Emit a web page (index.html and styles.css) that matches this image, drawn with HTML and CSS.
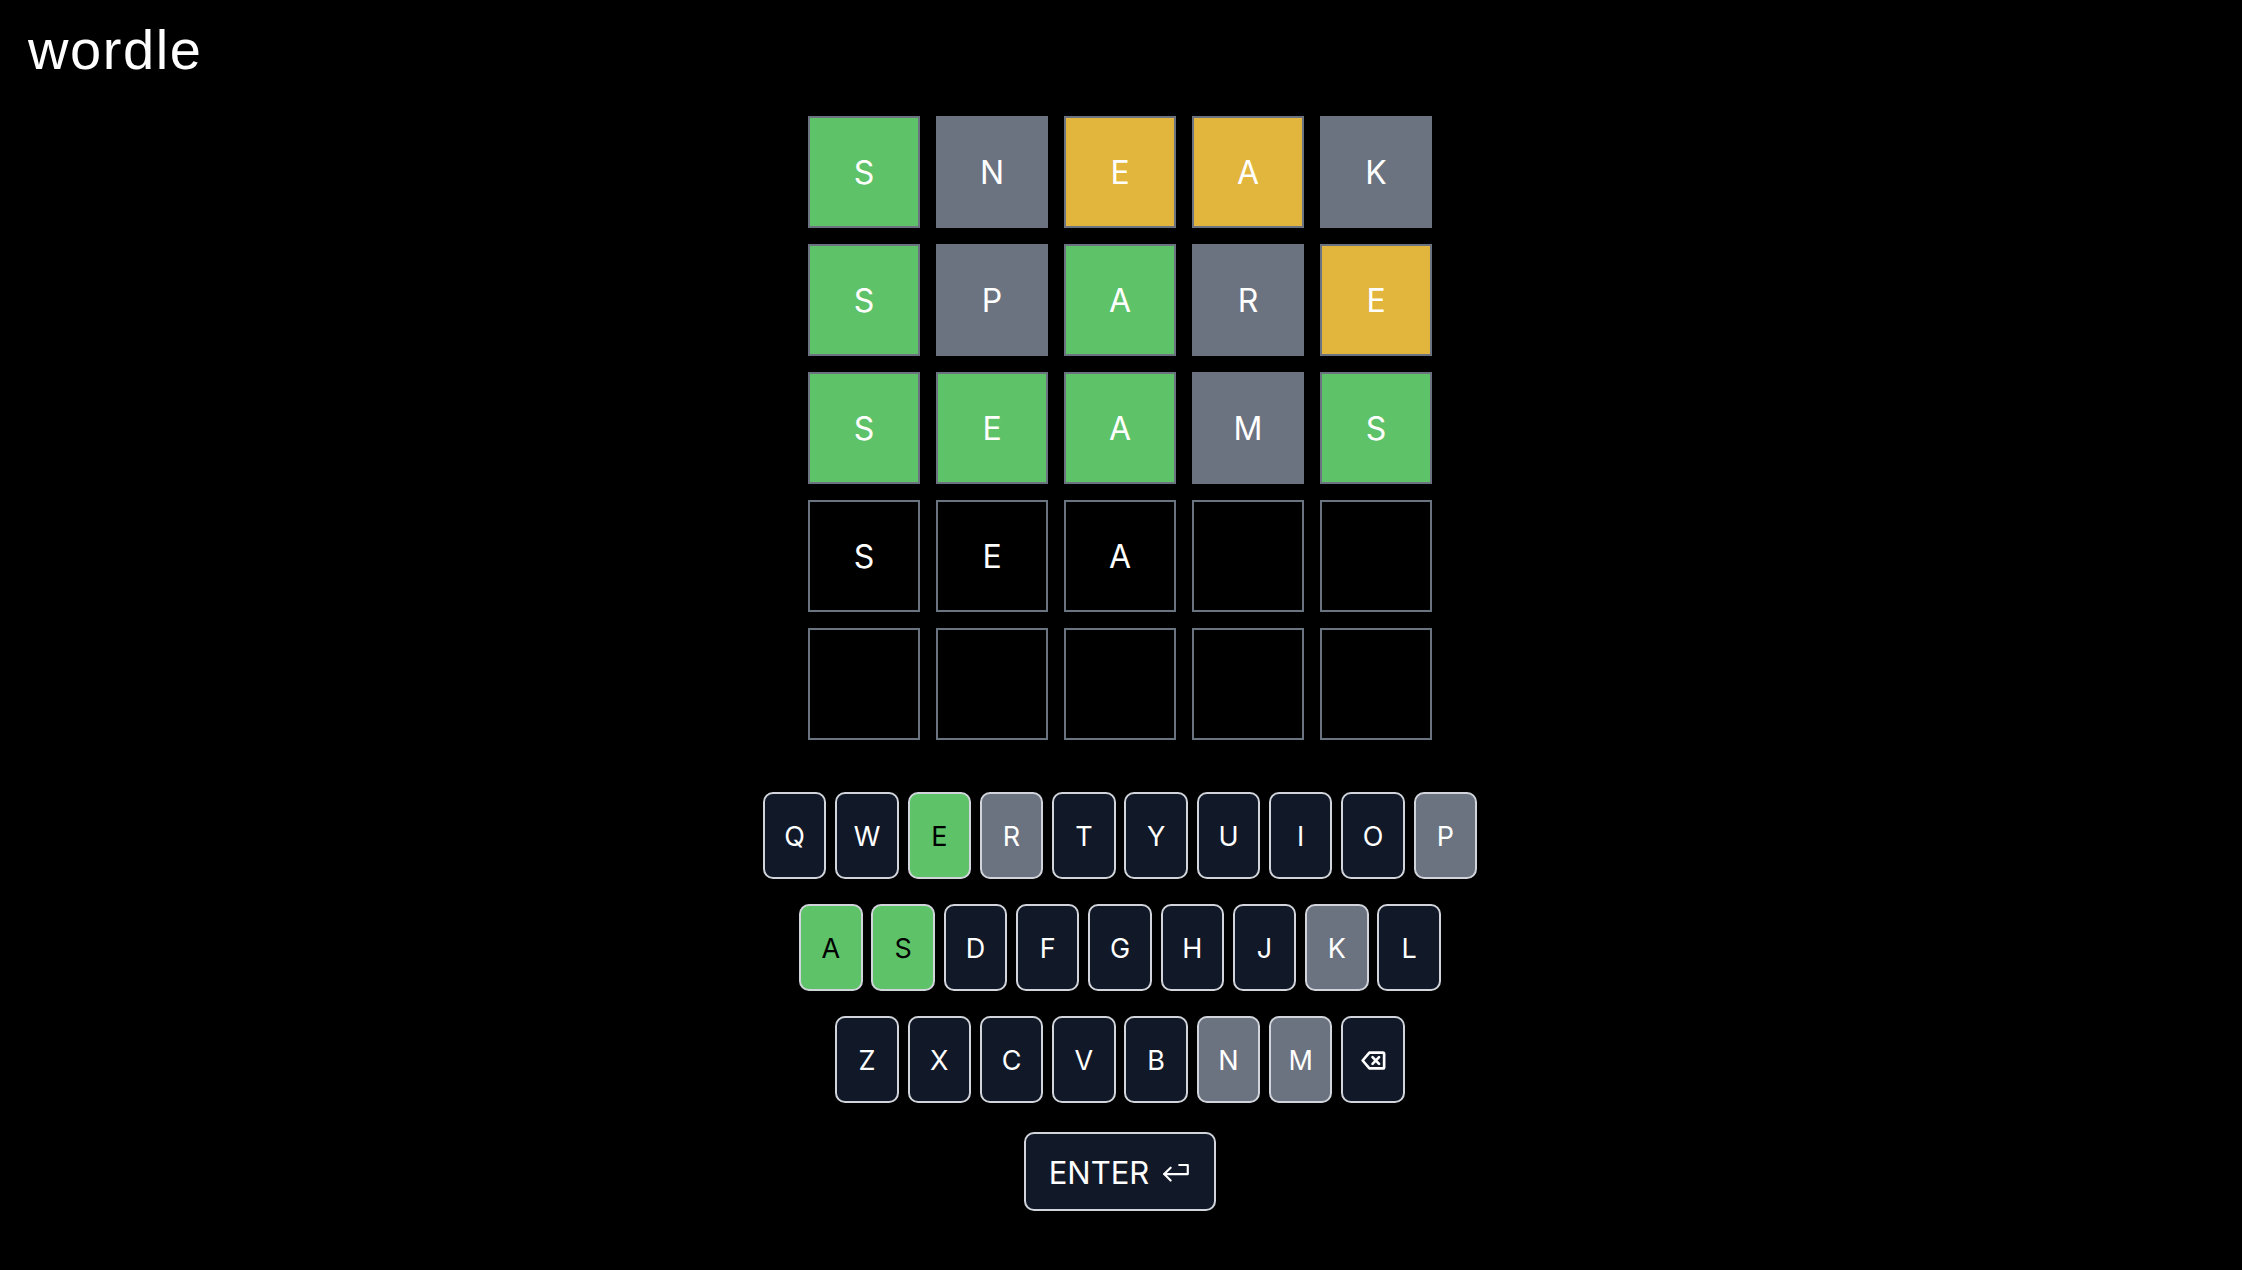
FILE: index.html
```html
<!DOCTYPE html>
<html lang="en">
<head>
<meta charset="utf-8">
<title>wordle</title>
<link rel="stylesheet" href="styles.css">
</head>
<body>
<header class="header">
  <h1 class="title">wordle</h1>
</header>
<main class="game">
  <div class="board">
    <div class="tile correct">S</div>
    <div class="tile absent">N</div>
    <div class="tile present">E</div>
    <div class="tile present">A</div>
    <div class="tile absent">K</div>

    <div class="tile correct">S</div>
    <div class="tile absent">P</div>
    <div class="tile correct">A</div>
    <div class="tile absent">R</div>
    <div class="tile present">E</div>

    <div class="tile correct">S</div>
    <div class="tile correct">E</div>
    <div class="tile correct">A</div>
    <div class="tile absent">M</div>
    <div class="tile correct">S</div>

    <div class="tile empty">S</div>
    <div class="tile empty">E</div>
    <div class="tile empty">A</div>
    <div class="tile empty"></div>
    <div class="tile empty"></div>

    <div class="tile empty"></div>
    <div class="tile empty"></div>
    <div class="tile empty"></div>
    <div class="tile empty"></div>
    <div class="tile empty"></div>
  </div>

  <div class="keyboard">
    <div class="key-row">
      <button class="key">Q</button>
      <button class="key">W</button>
      <button class="key key-correct">E</button>
      <button class="key key-absent">R</button>
      <button class="key">T</button>
      <button class="key">Y</button>
      <button class="key">U</button>
      <button class="key">I</button>
      <button class="key">O</button>
      <button class="key key-absent">P</button>
    </div>
    <div class="key-row">
      <button class="key key-correct">A</button>
      <button class="key key-correct">S</button>
      <button class="key">D</button>
      <button class="key">F</button>
      <button class="key">G</button>
      <button class="key">H</button>
      <button class="key">J</button>
      <button class="key key-absent">K</button>
      <button class="key">L</button>
    </div>
    <div class="key-row">
      <button class="key">Z</button>
      <button class="key">X</button>
      <button class="key">C</button>
      <button class="key">V</button>
      <button class="key">B</button>
      <button class="key key-absent">N</button>
      <button class="key key-absent">M</button>
      <button class="key" aria-label="backspace">
        <svg class="icon-back" viewBox="0 0 24 24" fill="none" stroke="currentColor" stroke-width="2.2" stroke-linecap="round" stroke-linejoin="round">
          <path d="M8.6 5.5H19.8a1 1 0 0 1 1 1v11a1 1 0 0 1-1 1H8.6L3 12z"/>
          <path d="M11.2 9.2l5.4 5.6M16.6 9.2l-5.4 5.6"/>
        </svg>
      </button>
    </div>
    <div class="key-row enter-row">
      <button class="key key-enter">
        <span>ENTER</span>
        <svg class="icon-enter" viewBox="0 0 28 20" fill="none" stroke="currentColor" stroke-width="2" stroke-linecap="round" stroke-linejoin="round">
          <path d="M17 2.5h8v8.5H3"/>
          <path d="M9 5L3 11l6 6"/>
        </svg>
      </button>
    </div>
  </div>
</main>
</body>
</html>
```
FILE: styles.css
```css
* {
  box-sizing: border-box;
}

html, body {
  margin: 0;
  padding: 0;
  background: #000000;
  color: #ffffff;
}

body {
  font-family: Inter, "Noto Sans", sans-serif;
  min-height: 1270px;
}

.header {
  padding: 16px 0 0 28px;
  height: 116px;
}

.title {
  margin: 0;
  font-family: "Liberation Sans", Arial, sans-serif;
  font-weight: 400;
  font-size: 56px;
  line-height: 68px;
  letter-spacing: 1.6px;
}

.game {
  display: flex;
  flex-direction: column;
  align-items: center;
}

.board {
  display: grid;
  grid-template-columns: repeat(5, 112px);
  grid-auto-rows: 112px;
  gap: 16px;
  margin-right: 2px;
}

.tile {
  display: flex;
  align-items: center;
  justify-content: center;
  border: 2px solid #6b7280;
  padding-top: 2px;
  font-size: 32px;
  font-weight: 400;
  color: #ffffff;
  line-height: 1;
}

.tile.correct {
  background: #5ec269;
}

.tile.present {
  background: #e2b53d;
}

.tile.absent {
  background: #6b7280;
}

.tile.empty {
  background: #000000;
}

.keyboard {
  margin-top: 52px;
  display: flex;
  flex-direction: column;
  align-items: center;
  gap: 25px;
  margin-right: 2px;
}

.key-row {
  display: flex;
  gap: 8.8px;
}

.enter-row {
  margin-top: 4px;
}

.key {
  width: 63.5px;
  height: 87px;
  display: flex;
  align-items: center;
  justify-content: center;
  padding: 2px 0 0;
  background: #111827;
  color: #ffffff;
  border: 2px solid #d1d5db;
  border-radius: 10px;
  font-family: Inter, "Noto Sans", sans-serif;
  font-size: 27px;
  font-weight: 400;
  line-height: 1;
  cursor: pointer;
}

.key-correct {
  background: #5ec269;
  color: #000000;
}

.key-absent {
  background: #6b7280;
  color: #ffffff;
}

.icon-back {
  width: 29px;
  height: 29px;
}

.key-enter {
  width: 192px;
  height: 79px;
  gap: 12px;
  font-size: 31px;
}

.icon-enter {
  width: 30px;
  height: 22px;
  margin-top: 0;
}
```
